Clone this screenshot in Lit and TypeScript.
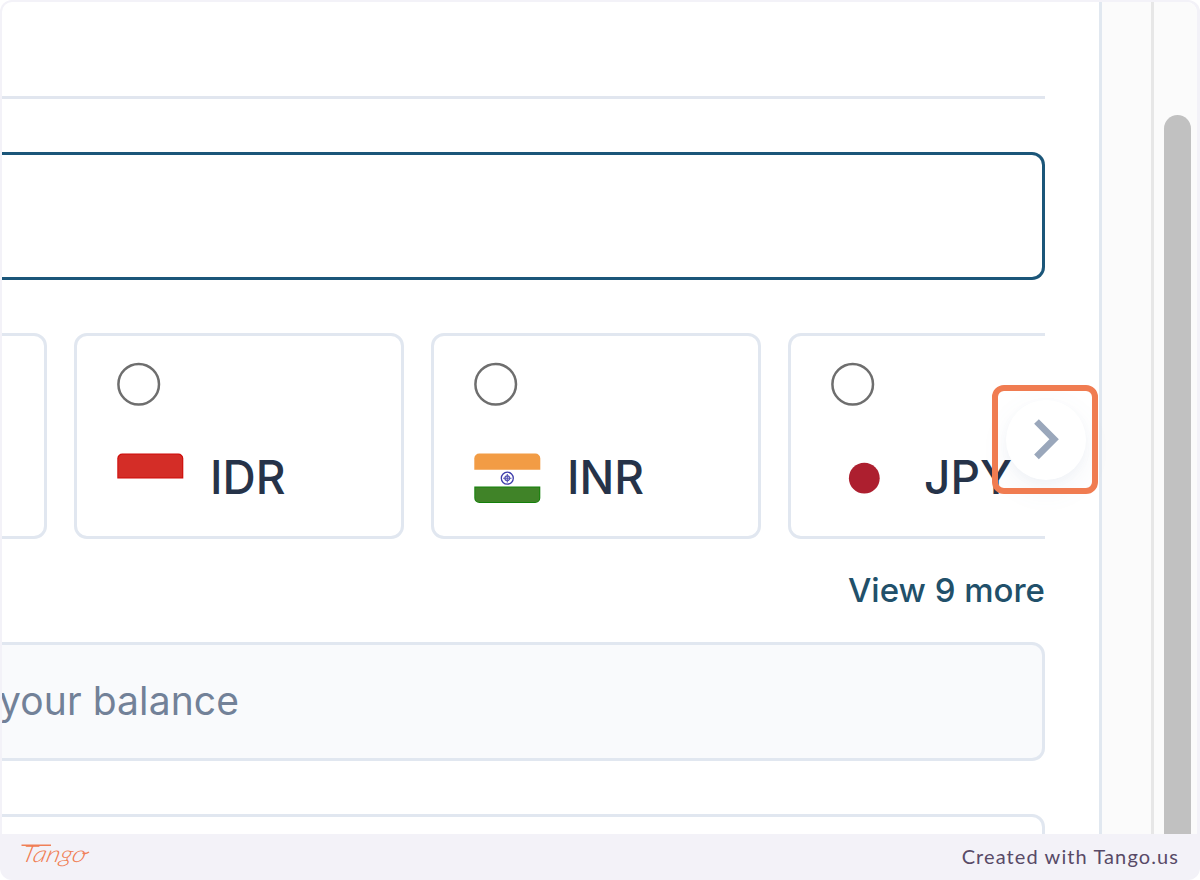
import { LitElement, html, css, svg } from "lit";
import { customElement, property } from "lit/decorators.js";

const flags: Record<string, unknown> = {
  IDR: svg`<path d="M5 0H61a5 5 0 0 1 5 5V25H0V5a5 5 0 0 1 5-5z" fill="#cf0b08"/>
    <path d="M5.500 1H60.500a4.500 4.500 0 0 1 4.500 4.500V24H1V5.500A4.500 4.500 0 0 1 5.500 1z" fill="#d42d27"/>`,
  INR: svg`<path d="M5 0H61a5 5 0 0 1 5 5V16.300H0V5a5 5 0 0 1 5-5z" fill="#f29c45"/>
    <path d="M0 33H66V44.500a5 5 0 0 1-5 5H5a5 5 0 0 1-5-5z" fill="#128009"/>
    <path d="M1 34H65V44.500a4 4 0 0 1-4 4H5a4 4 0 0 1-4-4z" fill="#408328"/>
    <circle cx="33" cy="24.700" r="6" fill="#fff" stroke="#3d3baa" stroke-width="1.300"/>
    <circle cx="33" cy="24.700" r="2.400" fill="none" stroke="#5654b4" stroke-width="1.300"/>
    <path d="M33 20.500v8.400M28.800 24.700h8.400" stroke="#5654b4" stroke-width="1.100"/>`,
  JPY: svg`<circle cx="33" cy="24.700" r="15.400" fill="#ad1f2f"/>`,
};

@customElement("currency-card")
class CurrencyCard extends LitElement {
  @property() code = "";
  static styles = css`
    :host {
      display: block;
      box-sizing: border-box;
      flex: none;
      width: 330px;
      height: 206px;
      border: 3px solid #e1e7f0;
      border-radius: 13px;
      padding: 26px 40px;
      background: #fff;
    }
    .row {
      display: flex;
      align-items: center;
      gap: 26px;
      margin-top: 47px;
      height: 50px;
    }
    .code {
      font: 500 46px/50px Inter, sans-serif;
      color: #263349;
      white-space: nowrap;
      padding-bottom: 3px;
    }
    svg {
      display: block;
      flex: none;
    }
  `;
  render() {
    if (!this.code) return html``;
    return html`<svg width="44" height="44" viewBox="0 0 44 44">
        <circle cx="21.700" cy="22.300" r="20.300" fill="#fff" stroke="#6e6e6e" stroke-width="2.500" />
      </svg>
      <div class="row">
        <svg width="67" height="50" viewBox="-0.300 -0.500 67 50">${flags[this.code]}</svg>
        <span class="code">${this.code}</span>
      </div>`;
  }
}

@customElement("app-root")
class AppRoot extends LitElement {
  static styles = css`
    :host {
      display: block;
      width: 1200px;
      height: 880px;
      background: #fff;
      font-family: Inter, sans-serif;
    }
    .frame {
      box-sizing: border-box;
      width: 1200px;
      height: 880px;
      display: flex;
      flex-direction: column;
      background: #f3f2f8;
      border-radius: 12px;
      padding: 2px 3px 0 2px;
      overflow: hidden;
    }
    .shot {
      position: relative;
      display: flex;
      height: 832px;
      overflow: hidden;
      background: #fff;
      border-radius: 10px 10px 0 0;
    }
    .panel {
      box-sizing: border-box;
      width: 1099.500px;
      flex: none;
      border-right: 3px solid #e1e8f0;
      padding-right: 53.500px;
    }
    .gutter {
      box-sizing: border-box;
      width: 52.500px;
      flex: none;
      background: #fbfbfb;
      border-right: 3px solid #e7e7e7;
    }
    .track {
      flex: 1;
      background: #fbfbfb;
      padding: 113px 0 0 10px;
    }
    .thumb {
      width: 27px;
      height: 760px;
      border-radius: 13.500px;
      background: #c1c1c1;
    }
    .rule {
      margin-top: 93.500px;
      height: 3px;
      background: #e1e6ef;
    }
    .field {
      box-sizing: border-box;
      border: 3px solid #e1e7f0;
      border-left: 0;
      border-radius: 0 13px 13px 0;
    }
    .active {
      margin-top: 53px;
      height: 128px;
      border-color: #1b5679;
    }
    .cards {
      display: flex;
      gap: 27px;
      margin-top: 53.500px;
      margin-left: -285px;
      overflow: hidden;
    }
    .more {
      margin-top: 28px;
      height: 46px;
      text-align: right;
      font-weight: 500;
      font-size: 33px;
      line-height: 46px;
      color: #21506a;
      white-space: nowrap;
    }
    .balance {
      margin-top: 28.500px;
      height: 119px;
      background: #f9fafc;
      overflow: hidden;
      font-size: 39px;
      line-height: 112px;
      color: #728198;
      white-space: nowrap;
    }
    .balance span {
      margin-left: -3px;
      letter-spacing: 0.1px;
    }
    .next {
      margin-top: 53px;
      height: 90px;
    }
    .arrow {
      position: absolute;
      left: 1003.500px;
      top: 397.500px;
      width: 80px;
      height: 80px;
      border-radius: 50%;
      background: #fff;
      box-shadow: 0 10px 28px rgba(100, 125, 170, 0.08), 0 3px 8px rgba(100, 125, 170, 0.04);
    }
    .arrow svg {
      display: block;
    }
    .mark {
      position: absolute;
      box-sizing: border-box;
      left: 990px;
      top: 383px;
      width: 106px;
      height: 109px;
      border: 6px solid #f07c51;
      border-radius: 12px;
    }
    .footer {
      flex: 1;
      display: flex;
      justify-content: space-between;
      align-items: center;
      padding: 0 18px 0 18px;
    }
    .logo {
      display: block;
    }
    .credit {
      font: 400 20px/24px Lato, sans-serif;
      letter-spacing: 1.1px;
      color: #584a67;
      white-space: nowrap;
      padding-bottom: 2px;
    }
  `;
  render() {
    return html`<div class="frame">
      <div class="shot">
        <div class="panel">
          <div class="rule"></div>
          <div class="field active"></div>
          <div class="cards">
            ${["", "IDR", "INR", "JPY"].map((c) => html`<currency-card .code=${c}></currency-card>`)}
          </div>
          <div class="more">View 9 more</div>
          <div class="field balance"><span>your balance</span></div>
          <div class="field next"></div>
        </div>
        <div class="gutter"></div>
        <div class="track"><div class="thumb"></div></div>
        <div class="arrow">
          <svg width="80" height="80" viewBox="0.150 0.250 24 24">
            <path fill="#9aa7bb" d="M10 6 8.590 7.410 13.170 12l-4.580 4.590L10 18l6-6z" />
          </svg>
        </div>
        <div class="mark"></div>
      </div>
      <div class="footer">
        <svg class="logo" width="72" height="38" viewBox="0 0 72 38">
          <path d="M1.500 7.300H31" stroke="#f08058" stroke-width="1.600" />
          <g transform="translate(0.500 23.500) skewX(-14)">
            <text x="0" y="0" textLength="64" lengthAdjust="spacingAndGlyphs" font-family="Lato, sans-serif" font-style="italic" font-weight="300" font-size="23" fill="#f07c51">Tango</text>
          </g>
          <path d="M62.500 15q3 1.500 6.500-1" fill="none" stroke="#f08058" stroke-width="1.500" />
        </svg>
        <span class="credit">Created with Tango.us</span>
      </div>
    </div>`;
  }
}
